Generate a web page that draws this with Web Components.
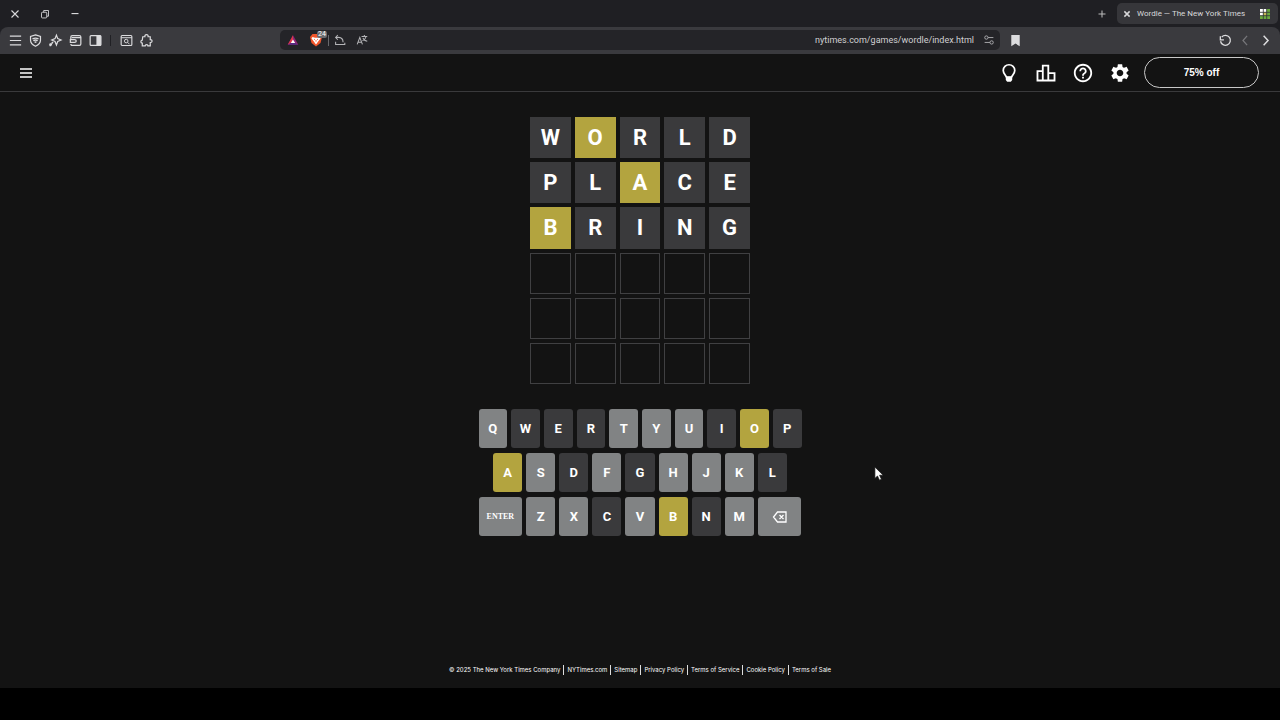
<!DOCTYPE html>
<html lang="en">
<head>
<meta charset="utf-8">
<meta name="viewport" content="width=device-width, initial-scale=1">
<title>Wordle — The New York Times</title>
<style>
html, body { margin: 0; background: #000; }
body { font-family: "Liberation Sans", Arial, sans-serif; color: #fff; }
</style>
</head>
<body>
<app-window></app-window>
<script>
const ICONS = {
  close: '<path d="M4 4l8 8M12 4l-8 8" stroke-width="1.300"/>',
  closeBold: '<path d="M5 5l6 6M11 5l-6 6" stroke-width="1.700"/>',
  restore: '<rect x="4" y="6" width="6" height="6.500" rx="1"/><path d="M6.500 6V4H12V10.500H10"/>',
  minimise: '<path d="M4 7.500h8" stroke-width="1.300"/>',
  plus: '<path d="M8 4v8M4 8h8" stroke-width="1.200"/>',
  lines: '<path d="M2 3.300h12M2 8h12M2 12.700h12" stroke-width="1.200"/>',
  shield: '<path d="M8 2l5.300 1.600v4.200c0 3-2.100 5-5.300 6.400-3.200-1.400-5.300-3.400-5.300-6.400V3.600z" stroke-width="1.300"/><path d="M4.800 6.300q3.200-1.700 6.400 0M5.700 8.200q2.300-1.400 4.600 0M7 10q1-.8 2 0" stroke-width="1.400"/>',
  sparkle: '<path d="M9 2.300l1.400 3.700 3.500 1.500-3.500 1.500L9 12.800 7.500 9 4 7.500 7.500 6z" stroke-width="1.300"/><path d="M5.300 9.700L3.700 11.500M2.500 11v3M1.300 12.500h3" stroke-width="1.600"/>',
  wallet: '<path d="M3 6.500V4.200Q3 2.700 4.600 2.700h7.600q1.500 0 1.500 1.500v7.600q0 1.500-1.500 1.500H4.600q-1.600 0-1.600-1.500M2.500 7h4.500q1.800 0 1.800 1.500T7 10H2.500zM4 5h9.500" stroke-width="1.300"/>',
  sidebar: '<rect x="2.300" y="2.700" width="11.400" height="10.600" rx="1" stroke-width="1.300"/><path d="M9.500 3h4v10h-4z" fill="currentColor"/>',
  find: '<rect x="2.300" y="2.700" width="11.400" height="10.600" rx="1" stroke-width="1.200"/><path d="M2.300 5h11.400"/><circle cx="7.700" cy="8.600" r="1.900"/><path d="M9.200 10l2 2"/>',
  puzzle: '<path d="M4 4h2.300q-.2-2.200 1.700-2.200T9.700 4H12v3.100q2 0 2 1.500t-2 1.600V13.700H9.500q0-1.300-1.400-1.300t-1.500 1.300H3.500v-2.900Q2 10.500 2 9.200t1.500-1.500z" stroke-width="1.300"/>',
  share: '<path d="M3 5h3.500q5 .2 5 5.500M5.500 2.300L3 5l2.500 2.700M3 10v3.200h10.500V11" stroke-width="1.200"/>',
  translate: '<path d="M2.500 13l3-8 3 8M3.700 10.500h3.600M7.500 4h6.500M10.700 2.300V4M8.500 9q3.500-1.500 4.200-5M9 5.800q1.400 3 5 3.700" stroke-width="1.200"/>',
  tune: '<circle cx="5" cy="5.200" r="1.900"/><path d="M7 5.200h6M3 10.800h6"/><circle cx="11" cy="10.800" r="1.900"/>',
  bookmark: '<path d="M3.500 2h9v12L8 11.300 3.500 14z" fill="currentColor" stroke="none"/>',
  reload: '<path d="M4 4.200A5.300 5.300 0 1 1 2.700 8.800M2.500 3.500v3.800h3.800" stroke-width="1.400"/>',
  back: '<path d="M9.700 3L5.300 8l4.400 5" stroke-width="1.300"/>',
  forward: '<path d="M6 3L10.700 8 6 13" stroke-width="1.600"/>',
  triangle: '<path d="M8 2.500L14 13.500H2z" fill="#8d2475" stroke="none"/><path d="M8 2.500L2 13.500l6-3.500z" fill="#e13848" stroke="none"/><path d="M2 13.500L8 10l6 3.500z" fill="#542a82" stroke="none"/><path d="M8 7.500l2.500 4h-5z" fill="#fff" stroke="none"/>',
  lion: '<path d="M4.500 2h7l2.500 3-1.500 6L8 14.500 3.500 11 2 5z" fill="#f1562b" stroke="none"/><path d="M4.500 5l2.500.7h2l2.500-.7 1 1.500-2 2.500L8 12.500 5.500 9l-2-2.500z" fill="#fff" stroke="none"/><path d="M6 7.200l1 .5M10 7.200l-1 .5M8 8v1.700" stroke="#f1562b" stroke-width=".8"/>',
  favicon: '<path d="M3 3h10v10H3z" fill="#6aaa40" stroke="none"/><path d="M3 3h6.500v3.300H3zM3 6.500h3.200v3H3z" fill="#fff" stroke="none"/><path d="M6.500 6.500h3v3h-3z" fill="#c9b458" stroke="none"/><path d="M3 6.300h10M3 9.700h10M6.300 3v10M9.700 3v10" stroke="#343438" stroke-width=".8"/>',
  menu: '<path d="M2 4h12M2 8h12M2 12h12" stroke-width="1.700"/>',
  bulb: '<path d="M12 3a6.300 6.300 0 0 0-6.300 6.300c0 2.900 2.300 4.700 3.600 7.200h5.400c1.300-2.500 3.600-4.300 3.600-7.200A6.300 6.300 0 0 0 12 3z" stroke-width="1.900"/><path d="M8.500 16h7v3.500L14 21.500h-4l-1.500-2z" fill="currentColor" stroke="none"/>',
  stats: '<path d="M2.700 10h5.800v10.200H2.700zM8.500 4h6v16.200h-6zM14.500 12.200h6.800v8h-6.800z" stroke-width="2"/>',
  help: '<path d="M11 18h2v-2h-2v2zm1-16C6.480 2 2 6.480 2 12s4.480 10 10 10 10-4.480 10-10S17.520 2 12 2zm0 18c-4.410 0-8-3.590-8-8s3.590-8 8-8 8 3.590 8 8-3.590 8-8 8zm0-14c-2.210 0-4 1.790-4 4h2c0-1.100.9-2 2-2s2 .9 2 2c0 2-3 1.750-3 5h2c0-2.250 3-2.500 3-5 0-2.210-1.790-4-4-4z" fill="currentColor" stroke="none"/>',
  gear: '<path d="M19.140 12.940c.04-.3.060-.61.060-.94 0-.32-.02-.64-.07-.94l2.030-1.580c.18-.14.230-.41.120-.61l-1.920-3.320c-.12-.22-.37-.29-.59-.22l-2.390.96c-.5-.38-1.030-.7-1.620-.94l-.36-2.540c-.04-.24-.24-.41-.48-.41h-3.840c-.24 0-.43.170-.47.410l-.36 2.540c-.59.240-1.130.570-1.620.94l-2.390-.96c-.22-.08-.47 0-.59.220L2.740 8.870c-.12.210-.08.470.120.610l2.030 1.580c-.05.300-.09.630-.09.940s.02.640.07.940l-2.030 1.580c-.18.140-.23.410-.12.610l1.920 3.320c.12.220.37.290.59.220l2.390-.96c.5.380 1.030.7 1.620.94l.36 2.540c.05.240.24.410.48.410h3.840c.24 0 .44-.17.47-.41l.36-2.540c.59-.24 1.130-.56 1.620-.94l2.390.96c.22.080.47 0 .59-.22l1.920-3.320c.12-.22.070-.47-.12-.61l-2.010-1.580zM12 15.600c-1.980 0-3.600-1.620-3.600-3.600s1.620-3.600 3.600-3.600 3.600 1.620 3.600 3.600-1.620 3.600-3.600 3.600z" fill="currentColor" stroke="none"/>',
  backspace: '<path d="M5.500 3h8.500v10H5.500L1.500 8zM7.500 6l4 4M11.500 6l-4 4" stroke-width="1.300"/>',
  pointer: '<path d="M1 0v13l3-2.700L6.200 15l2.300-1-2.100-4.600h4.100z" fill="#fff" stroke="#111" stroke-width=".8"/>'
};
const LARGE = ['bulb', 'stats', 'help', 'gear'];

class UiElement extends HTMLElement {
  connectedCallback() {
    if (this.shadowRoot) return;
    this.attachShadow({ mode: 'open' }).innerHTML = this.render();
  }
}

customElements.define('ui-icon', class extends UiElement {
  render() {
    const n = this.getAttribute('name');
    const box = LARGE.includes(n) ? 24 : 16;
    return `<style>
      :host { display: block; flex: none; width: var(--icon-size, 16px); height: var(--icon-size, 16px); }
      svg { display: block; width: 100%; height: 100%; }
    </style><svg viewBox="0 0 ${box} ${box}" fill="none" stroke="currentColor" aria-hidden="true">${ICONS[n]}</svg>`;
  }
});

customElements.define('icon-button', class extends UiElement {
  render() {
    return `<style>
      :host { display: block; flex: none; width: 20px; }
      button { display: flex; align-items: center; justify-content: center; width: 100%; height: 100%;
        padding: 0; border: 0; background: none; color: inherit; cursor: pointer; }
    </style><button type="button" aria-label="${this.getAttribute('label')}"><ui-icon name="${this.getAttribute('icon')}"></ui-icon></button>`;
  }
});

customElements.define('tab-strip', class extends UiElement {
  render() {
    return `<style>
      :host { display: flex; align-items: center; justify-content: space-between; height: 27px;
        background: #1f1f23; color: #d8d8da; padding-right: 2px; }
      div { display: flex; align-items: center; }
      .window icon-button { width: 30px; }
      .window icon-button, .new { --icon-size: 14px; }
      .new { margin-right: 5px; color: #bbb; }
      .tab { box-sizing: border-box; width: 161px; height: 21px; padding: 0 5px 0 3px; border-radius: 5px; background: #36363a; }
      .tab icon-button { width: 14px; --icon-size: 14px; }
      .title { flex: 1; margin-left: 3px; white-space: nowrap; font: 8px/20px Roboto, sans-serif; }
    </style>
    <div class="window">
      <icon-button icon="close" label="Close window"></icon-button>
      <icon-button icon="restore" label="Restore window"></icon-button>
      <icon-button icon="minimise" label="Minimise window"></icon-button>
    </div>
    <div>
      <icon-button class="new" icon="plus" label="New tab"></icon-button>
      <div class="tab">
        <icon-button icon="closeBold" label="Close tab"></icon-button>
        <span class="title">Wordle — The New York Times</span>
        <ui-icon name="favicon"></ui-icon>
      </div>
    </div>`;
  }
});

customElements.define('address-bar', class extends UiElement {
  render() {
    return `<style>
      :host { display: flex; align-items: center; height: 20px; padding: 0 1px 0 3px; border-radius: 5px;
        background: #242428; color: #b5b5b8; --icon-size: 14px; }
      .shield { position: relative; margin-left: 3px; --icon-size: 16px; }
      .count { position: absolute; left: 11px; top: -1px; padding: 0 1px; border-radius: 2px; background: #6a6a6e;
        color: #fff; font: 7px/7px Roboto, sans-serif; }
      .rule { width: 1px; height: 11px; margin: 0 1px 0 2px; background: #68686c; }
      .translate { margin-left: 2px; }
      input { flex: 1; min-width: 0; padding: 0; border: 0; outline: 0; background: none; color: #d0d0d2;
        text-align: right; font: 9px/20px Roboto, sans-serif; }
      .site { margin-left: 5px; }
    </style>
    <icon-button icon="triangle" label="Rewards"></icon-button>
    <div class="shield"><icon-button icon="lion" label="Shields"></icon-button><span class="count">24</span></div>
    <span class="rule"></span>
    <icon-button icon="share" label="Share"></icon-button>
    <icon-button class="translate" icon="translate" label="Translate"></icon-button>
    <input type="text" aria-label="Address" value="nytimes.com/games/wordle/index.html">
    <icon-button class="site" icon="tune" label="Site settings"></icon-button>`;
  }
});

customElements.define('tool-bar', class extends UiElement {
  render() {
    return `<style>
      :host { display: grid; grid-template-columns: 1fr 56.25% 1fr; align-items: center; box-sizing: border-box; height: 27px;
        padding-bottom: 1px; border-radius: 8px 8px 0 0; background: #3a3a3e; color: #dcdcde; --icon-size: 15px; }
      .group { display: flex; align-items: center; padding: 0 5px; }
      .rule { width: 1px; height: 11px; margin: 0 5px; background: #202024; }
      .dim { color: #77777b; }
      .save { margin-right: auto; }
    </style>
    <div class="group">
      <icon-button icon="lines" label="Menu"></icon-button>
      <icon-button icon="shield" label="VPN"></icon-button>
      <icon-button icon="sparkle" label="Assistant"></icon-button>
      <icon-button icon="wallet" label="Wallet"></icon-button>
      <icon-button icon="sidebar" label="Sidebar"></icon-button>
      <span class="rule"></span>
      <icon-button icon="find" label="Search tabs"></icon-button>
      <icon-button icon="puzzle" label="Extensions"></icon-button>
    </div>
    <address-bar></address-bar>
    <div class="group">
      <icon-button class="save" icon="bookmark" label="Bookmark"></icon-button>
      <icon-button icon="reload" label="Reload"></icon-button>
      <icon-button class="dim" icon="back" label="Back"></icon-button>
      <icon-button icon="forward" label="Forward"></icon-button>
    </div>`;
  }
});

customElements.define('game-header', class extends UiElement {
  render() {
    return `<style>
      :host { display: flex; align-items: center; gap: 1px; box-sizing: border-box; height: 38px;
        padding: 0 21px 0 16px; border-bottom: 1px solid #3a3a3c; }
      icon-button { width: 36px; --icon-size: 22px; }
      .menu { width: 20px; --icon-size: 16px; margin-right: auto; }
      .offer { width: 115px; height: 31px; margin-left: 5px; padding: 0; border: 1px solid #c8c8c8; border-radius: 16px;
        background: none; color: #fff; font: bold 10px/28px "Liberation Sans", sans-serif; }
    </style>
    <icon-button class="menu" icon="menu" label="Navigation"></icon-button>
    <icon-button icon="bulb" label="Hints"></icon-button>
    <icon-button icon="stats" label="Statistics"></icon-button>
    <icon-button icon="help" label="Help"></icon-button>
    <icon-button icon="gear" label="Settings"></icon-button>
    <button type="button" class="offer">75% off</button>`;
  }
});

customElements.define('game-tile', class extends UiElement {
  render() {
    return `<style>
      :host { display: flex; align-items: center; justify-content: center; box-sizing: border-box;
        border: 1px solid #404042; font: bold 22px/24px Roboto, sans-serif; }
      :host([state]) { border: 0; }
      :host([state="absent"]) { background: #3a3a3c; }
      :host([state="present"]) { background: #b3a43f; }
    </style><slot></slot>`;
  }
});

customElements.define('game-board', class extends UiElement {
  render() {
    const rows = [['WORLD', 1], ['PLACE', 2], ['BRING', 0]];
    const filled = rows.map(([word, hit]) => [...word].map((c, i) =>
      `<game-tile state="${i === hit ? 'present' : 'absent'}">${c}</game-tile>`).join('')).join('');
    return `<style>
      :host { display: grid; grid-template: repeat(6, 1fr) / repeat(5, 1fr); gap: 4px; width: 220px; height: 267px; }
    </style>${filled}${'<game-tile></game-tile>'.repeat(15)}`;
  }
});

customElements.define('game-key', class extends UiElement {
  render() {
    return `<style>
      :host { display: block; flex: 1; height: 39px; }
      :host([wide]) { flex: 1.5; }
      button { display: flex; align-items: center; justify-content: center; width: 100%; height: 100%; padding: 0; border: 0;
        border-radius: 3px; background: #818384; color: #fff; font: bold 13px/16px Roboto, sans-serif; }
      :host([state="absent"]) button { background: #3a3a3c; }
      :host([state="present"]) button { background: #b3a43f; }
      :host([word]) button { font: bold 8px/12px "Liberation Serif", serif; }
    </style><button type="button"><slot></slot></button>`;
  }
});

customElements.define('game-keyboard', class extends UiElement {
  render() {
    const keys = s => [...s].map(c => {
      const state = 'OAB'.includes(c) ? 'present' : 'WERIPDGLCN'.includes(c) ? 'absent' : 'unused';
      return `<game-key state="${state}">${c}</game-key>`;
    }).join('');
    return `<style>
      :host { display: flex; flex-direction: column; gap: 5px; width: 323px; }
      .row { display: flex; }
      .row > game-key:not(:last-of-type) { margin-right: 4px; }
      .half { flex: .5; }
    </style>
    <div class="row">${keys('QWERTYUIOP')}</div>
    <div class="row"><span class="half"></span>${keys('ASDFGHJKL')}<span class="half"></span></div>
    <div class="row"><game-key wide word>ENTER</game-key>${keys('ZXCVBNM')}<game-key wide aria-label="Backspace"><ui-icon name="backspace"></ui-icon></game-key></div>`;
  }
});

customElements.define('site-footer', class extends UiElement {
  render() {
    const links = ['© 2025 The New York Times Company', 'NYTimes.com', 'Sitemap', 'Privacy Policy', 'Terms of Service', 'Cookie Policy', 'Terms of Sale'];
    return `<style>
      :host { display: block; padding-bottom: 13px; }
      nav { display: flex; justify-content: center; font: 6px/10px Inter, sans-serif; white-space: nowrap; }
      a { padding: 0 3px; color: #fff; text-decoration: none; }
      a + a { border-left: 1px solid #ddd; }
    </style><nav>${links.map(t => `<a href="#">${t}</a>`).join('')}</nav>`;
  }
});

customElements.define('app-window', class extends UiElement {
  render() {
    return `<style>
      :host { display: flex; flex-direction: column; box-sizing: border-box; min-height: 100vh; padding-bottom: 32px; background: #000; }
      .chrome { background: #1f1f23; }
      .page { display: flex; flex: 1; flex-direction: column; background: #131313; }
      main { display: flex; flex: 1; flex-direction: column; align-items: center; gap: 25px; padding: 25px 0; }
      .pointer { position: absolute; left: 874px; top: 467px; --icon-size: 14px; pointer-events: none; }
    </style>
    <div class="chrome"><tab-strip></tab-strip><tool-bar></tool-bar></div>
    <div class="page">
      <game-header></game-header>
      <main><game-board></game-board><game-keyboard></game-keyboard></main>
      <site-footer></site-footer>
    </div>
    <ui-icon class="pointer" name="pointer"></ui-icon>`;
  }
});
</script>
</body>
</html>
